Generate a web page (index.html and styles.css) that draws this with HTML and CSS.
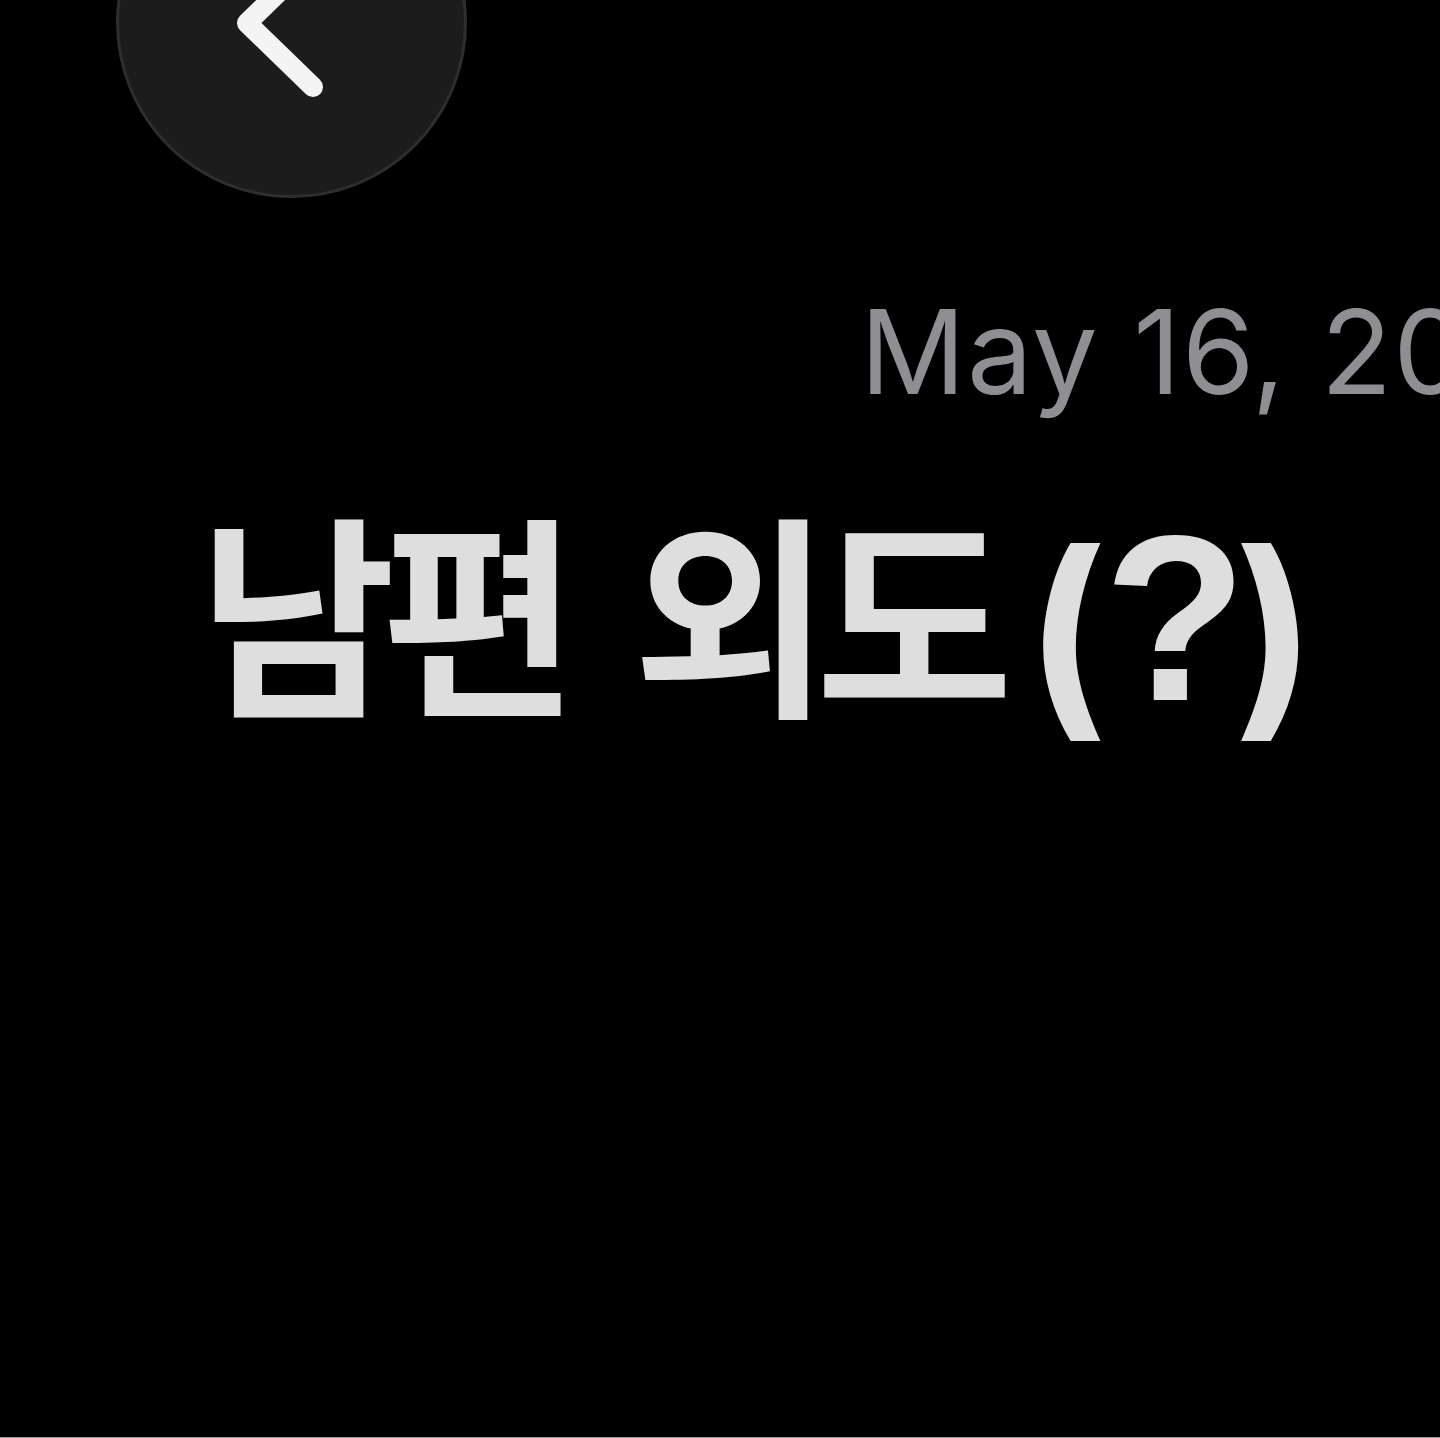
FILE: index.html
```html
<!DOCTYPE html>
<html lang="ko">
<head>
<meta charset="utf-8">
<title>남편 외도(?)</title>
<link rel="stylesheet" href="styles.css">
</head>
<body>
<div class="page">
  <header class="topbar">
    <button class="back" aria-label="Back">
      <svg class="chev" viewBox="0 0 351 351" width="351" height="351">
        <polyline points="197,112 131,176 197,240" fill="none" stroke="#f4f4f4" stroke-width="20" stroke-linecap="round" stroke-linejoin="round"/>
      </svg>
    </button>
  </header>
  <div class="date">May 16, 2025</div>
  <h1 class="title"><span class="ko">남편</span><span class="ko gap">외도</span><span class="paren open">(</span><span class="q">?</span><span class="paren close">)</span></h1>
</div>
</body>
</html>
```

FILE: styles.css
```css
html, body {
  margin: 0;
  padding: 0;
  background: #000;
}
.page {
  width: 1440px;
  height: 1438px;
  box-sizing: border-box;
  overflow: hidden;
  background: #000;
  border-bottom: 1px solid #9c9c9c;
  display: flex;
  flex-direction: column;
}
.topbar {
  display: flex;
  padding-left: 116px;
  margin-top: -153px;
}
.back {
  width: 351px;
  height: 351px;
  border-radius: 50%;
  background: #1c1c1c;
  border: 3px solid #2e2e2e;
  box-sizing: border-box;
  padding: 0;
  display: block;
  flex: none;
  overflow: hidden;
}
.chev {
  display: block;
  margin: -3px;
}
.date {
  margin-top: 95px;
  padding-left: 860px;
  white-space: nowrap;
  font-family: Inter, "Liberation Sans", sans-serif;
  font-size: 117px;
  font-weight: 400;
  letter-spacing: 1.2px;
  color: #8e8e93;
  line-height: 1;
}
.title {
  margin: 89px 0 0 0;
  padding-left: 198px;
  white-space: nowrap;
  font-family: "Noto Sans CJK KR", sans-serif;
  font-size: 215px;
  font-weight: 700;
  color: #dedede;
  line-height: 1;
}
.ko {
  letter-spacing: -15px;
}
.gap {
  margin-left: 69px;
}
.paren {
  font-family: Inter, "Liberation Sans", sans-serif;
  font-weight: 700;
  font-size: 218px;
  line-height: 0.5;
  vertical-align: -11px;
}
.open {
  margin-left: 27px;
}
.q {
  font-family: "Liberation Sans", Arial, sans-serif;
  font-weight: 700;
  font-size: 235px;
  line-height: 0.5;
  margin-left: -4px;
}
.close {
  margin-left: -13px;
}
```
